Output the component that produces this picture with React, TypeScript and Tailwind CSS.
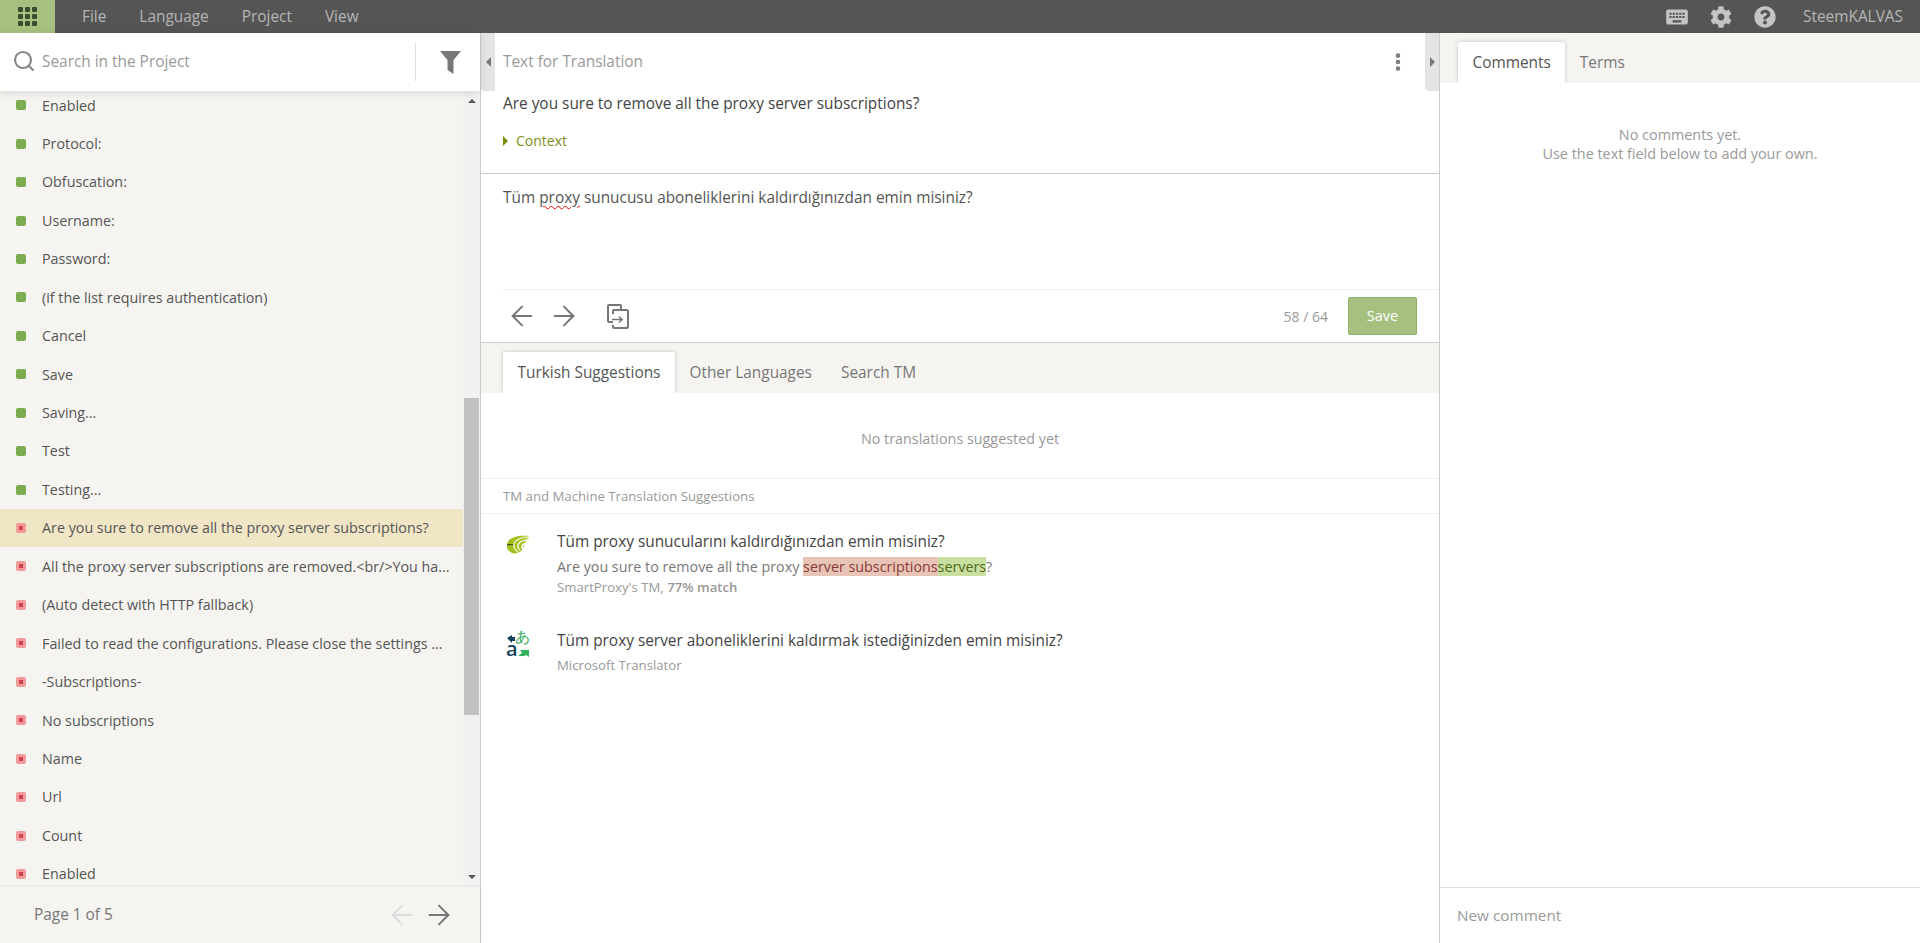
import React from "react";
import { Search, ArrowLeft, ArrowRight, EllipsisVertical } from "lucide-react";
import { MdKeyboard } from "react-icons/md";
import { FaCog, FaQuestionCircle } from "react-icons/fa";

const font = { fontFamily: '"Open Sans", sans-serif' };

const doneRows = [
  "Enabled",
  "Protocol:",
  "Obfuscation:",
  "Username:",
  "Password:",
  "(if the list requires authentication)",
  "Cancel",
  "Save",
  "Saving...",
  "Test",
  "Testing...",
];

const todoRows = [
  "Are you sure to remove all the proxy server subscriptions?",
  "All the proxy server subscriptions are removed.<br/>You ha...",
  "(Auto detect with HTTP fallback)",
  "Failed to read the configurations. Please close the settings ...",
  "-Subscriptions-",
  "No subscriptions",
  "Name",
  "Url",
  "Count",
  "Enabled",
];

const GridIcon = () => (
  <div className="grid grid-cols-3 gap-[2px]">
    {Array.from({ length: 9 }).map((_, i) => (
      <div key={i} className="h-[5px] w-[5px] rounded-[1px] bg-[#3d4a2c]" />
    ))}
  </div>
);

const Row = ({ label, done, active }: { label: string; done: boolean; active?: boolean }) => (
  <div className={`flex h-[38.45px] shrink-0 items-center pl-4 text-[14.3px] text-[#555] ${active ? "bg-[#f0e6c6]" : ""}`}>
    {done ? (
      <div className="h-[10px] w-[10px] rounded-[2px] bg-[#7dab4f]" />
    ) : (
      <div className="flex h-[10px] w-[10px] items-center justify-center rounded-[2px] bg-[#f09a9e]">
        <div className="h-1 w-1 bg-[#d2444c]" />
      </div>
    )}
    <span className="ml-[16px] whitespace-nowrap">{label}</span>
  </div>
);

const Tab = ({ label, active }: { label: string; active?: boolean }) => (
  <div
    className={`flex h-[41px] items-center justify-center px-[14.5px] text-[15.4px] ${
      active ? "rounded-t-[2px] bg-white text-[#555] shadow-[0_0_4px_rgba(0,0,0,0.2)] [clip-path:inset(-6px_-6px_0_-6px)]" : "text-[#777]"
    }`}
  >
    {label}
  </div>
);

const FilterIcon = () => (
  <svg width="21" height="23" viewBox="0 0 21 23" fill="#777">
    <path d="M0 0h21l-7.500 9v14l-6-4V9z" />
  </svg>
);

const CopyIcon = () => (
  <svg width="22" height="25" viewBox="0 0 22 25" fill="none" stroke="#777" strokeWidth="2">
    <path d="M6 18H2a1 1 0 0 1-1-1V2a1 1 0 0 1 1-1h11a1 1 0 0 1 1 1v4" />
    <path d="M6 10V7a1 1 0 0 1 1-1h13a1 1 0 0 1 1 1v16a1 1 0 0 1-1 1H7a1 1 0 0 1-1-1v-2" />
    <path d="M5 15.500h10M12 12.500l3 3-3 3" strokeWidth="1.600" />
  </svg>
);

const SmartProxyLogo = () => (
  <svg width="22" height="19" viewBox="0 0 22 19" fill="none">
    <path d="M0 9C1 3 10 0 22 1c-3 4-5 10-7 14-3 3-7 4-10 3C1 16-1 13 0 9z" fill="#a2bf1e" />
    <path d="M22 2C14 2 8 5 7 9c-.500 3 1 6 4 8" stroke="#e6efb0" strokeWidth="1.500" />
    <path d="M22 5c-6 0-10 2-11 5-.500 2 .500 4 2 5" stroke="#f4f8dc" strokeWidth="1.500" />
    <path d="M22 8c-3 0-6 1-7 3-.500 1 0 2 .500 3" stroke="#fff" strokeWidth="1.500" />
    <path d="M0 9h6v1.200H0z" fill="#3f5a10" />
  </svg>
);

const MsTranslatorLogo = () => (
  <svg width="22" height="27" viewBox="0 0 22 27" className="overflow-visible">
    <path d="M0 8l5-3v2h3v4H5v2z" fill="#12405c" />
    <text x="8" y="12" fontSize="15" fill="#33a860" style={font}>あ</text>
    <text x="-1" y="26" fontSize="20" fontWeight="600" fill="#12405c" style={font}>a</text>
    <path d="M11 26l4-3-2-3h9v7l-3-2-2 1z" fill="#2fb35d" />
  </svg>
);

const App = () => {
  return (
    <div className="flex h-[943px] w-[1920px] flex-col overflow-hidden bg-white" style={font}>
      {/* top bar */}
      <header className="flex h-[33px] shrink-0 items-center bg-[#555] text-[15.4px] text-[#b5b5b5]">
        <div className="flex h-full w-[55px] items-center justify-center bg-[#a5c07f]">
          <GridIcon />
        </div>
        <nav className="ml-[27px] flex gap-[33px]">
          <span>File</span>
          <span>Language</span>
          <span>Project</span>
          <span>View</span>
        </nav>
        <div className="ml-auto flex items-center pr-[17px]">
          <MdKeyboard size={26} className="text-[#c4c4c4]" />
          <FaCog size={22} className="ml-[20px] text-[#c4c4c4]" />
          <FaQuestionCircle size={22} className="ml-[22px] text-[#c4c4c4]" />
          <span className="ml-[27px]">SteemKALVAS</span>
        </div>
      </header>

      <div className="flex min-h-0 flex-1">
        {/* project strings */}
        <aside className="flex w-[481px] shrink-0 flex-col border-r border-[#ccc] bg-[#f6f4f1]">
          <div className="z-10 flex h-[58px] shrink-0 items-center bg-white shadow-[0_2px_8px_rgba(0,0,0,0.12)]">
            <Search size={24} className="mb-[2px] ml-[12px] text-[#888]" strokeWidth={2.2} />
            <span className="mb-[1px] ml-[6px] text-[15.4px] text-[#999]">Search in the Project</span>
            <div className="ml-auto h-[38px] w-px bg-[#ddd]" />
            <div className="ml-[24px] mr-[19px] flex"><FilterIcon /></div>
          </div>
          <div className="flex min-h-0 flex-1 overflow-hidden">
            <div className="-mt-[5px] flex min-w-0 flex-1 flex-col">
              {doneRows.map((label, i) => (
                <Row key={i} label={label} done />
              ))}
              {todoRows.map((label, i) => (
                <Row key={i} label={label} done={false} active={i === 0} />
              ))}
            </div>
            {/* scrollbar */}
            <div className="flex w-[17px] shrink-0 flex-col items-center bg-[#f1f1f1]">
              <div className="mt-[8px] h-0 w-0 border-x-[4px] border-b-[4px] border-x-transparent border-b-[#555]" />
              <div className="mt-[295px] h-[317px] w-[15px] bg-[#c1c1c1]" />
              <div className="mb-[8px] mt-auto h-0 w-0 border-x-[4px] border-t-[4px] border-x-transparent border-t-[#555]" />
            </div>
          </div>
          <div className="z-10 flex h-[56px] shrink-0 items-center bg-[#f6f4f1] pl-[34px] pr-[25px] text-[15.4px] text-[#777] shadow-[0_-1px_3px_rgba(0,0,0,0.06)]">
            <span>Page 1 of 5</span>
            <ArrowLeft size={32} strokeWidth={1.5} className="ml-auto text-[#ddd]" />
            <ArrowRight size={32} strokeWidth={1.5} className="ml-[5px] text-[#777]" />
          </div>
        </aside>

        {/* editor */}
        <main className="flex min-w-0 flex-1 flex-col border-r border-[#ccc]">
          <section className="relative h-[141px] shrink-0 border-b border-[#ccc] px-[22px]">
            <div className="absolute left-0 top-0 flex h-[58px] w-[14px] items-center justify-center rounded-bl-[4px] bg-[#e4e4e4]">
              <div className="h-0 w-0 border-y-[5px] border-r-[5px] border-y-transparent border-r-[#777]" />
            </div>
            <div className="absolute right-0 top-0 flex h-[58px] w-[14px] items-center justify-center rounded-bl-[4px] bg-[#e4e4e4]">
              <div className="h-0 w-0 border-y-[5px] border-l-[5px] border-y-transparent border-l-[#777]" />
            </div>
            <div className="flex h-[58px] items-center justify-between text-[15.4px] text-[#999]">
              <span className="mb-[1px]">Text for Translation</span>
              <EllipsisVertical size={22} className="mr-[8px] text-[#777]" strokeWidth={3} />
            </div>
            <p className="pt-[1px] text-[15.4px] leading-[24px] text-[#444]">Are you sure to remove all the proxy server subscriptions?</p>
            <div className="mt-[13px] flex items-center text-[14px] leading-[24px] text-[#7f8f1a]">
              <div className="h-0 w-0 border-y-[5px] border-l-[5px] border-y-transparent border-l-[#7a8c00]" />
              <span className="ml-[8px]">Context</span>
            </div>
          </section>

          <section className="h-[169px] shrink-0 border-b border-[#ccc]">
            <div className="ml-[22px] h-[116px] border-b border-[#eee] pt-[12px] text-[15.4px] leading-[24px] text-[#555]">
              Tüm <span className="underline decoration-[#e00] decoration-wavy decoration-1 underline-offset-2">proxy</span> sunucusu aboneliklerini kaldırdığınızdan emin misiniz?
            </div>
            <div className="flex h-[52px] items-center pl-[25px] pr-[22px]">
              <ArrowLeft size={32} strokeWidth={1.5} className="text-[#777]" />
              <ArrowRight size={32} strokeWidth={1.5} className="ml-[10px] text-[#777]" />
              <div className="ml-[27px] flex"><CopyIcon /></div>
              <span className="ml-auto text-[14px] text-[#999]">58 / 64</span>
              <button className="ml-[20px] h-[38px] w-[69px] rounded-[2px] border border-[#8fae66] bg-[#a5c07f] text-[14.5px] font-medium text-white">Save</button>
            </div>
          </section>

          <section className="flex h-[50px] shrink-0 items-end bg-[#f6f4f1] pl-[22px]">
            <Tab label="Turkish Suggestions" active />
            <Tab label="Other Languages" />
            <Tab label="Search TM" />
          </section>

          <div className="flex h-[86px] shrink-0 items-center justify-center border-b border-[#eee] pt-[6px] text-[14.35px] text-[#999]">No translations suggested yet</div>
          <div className="flex h-[35px] shrink-0 items-center border-b border-[#eee] pl-[22px] pt-[1px] text-[13.2px] text-[#999]">TM and Machine Translation Suggestions</div>

          <div className="flex pl-[26px] pt-[18px]">
            <div className="w-[26px] shrink-0 pt-[3px]"><SmartProxyLogo /></div>
            <div className="ml-[24px]">
              <p className="text-[15.4px] leading-[20px] text-[#444]">Tüm proxy sunucularını kaldırdığınızdan emin misiniz?</p>
              <p className="mt-[5px] text-[14.3px] leading-[19px] text-[#777]">
                Are you sure to remove all the proxy <span className="bg-[#e8c4b6] text-[#8a3a3a]">server subscriptions</span>
                <span className="bg-[#c9df9f] text-[#4f6a1c]">servers</span>?
              </p>
              <p className="mt-[2px] text-[13.2px] leading-[18px] text-[#999]">
                SmartProxy&apos;s TM, <b className="font-semibold">77% match</b>
              </p>
            </div>
          </div>
          <div className="mt-[35px] flex pl-[26px]">
            <div className="w-[26px] shrink-0 -mt-[1px]"><MsTranslatorLogo /></div>
            <div className="ml-[24px]">
              <p className="text-[15.4px] leading-[20px] text-[#444]">Tüm proxy server aboneliklerini kaldırmak istediğinizden emin misiniz?</p>
              <p className="mt-[5px] text-[13.2px] leading-[18px] text-[#999]">Microsoft Translator</p>
            </div>
          </div>
        </main>

        {/* comments */}
        <aside className="flex w-[480px] shrink-0 flex-col">
          <div className="flex h-[50px] shrink-0 items-end bg-[#f6f4f1] pl-[18px]">
            <Tab label="Comments" active />
            <Tab label="Terms" />
          </div>
          <div className="flex-1 pt-[42px] text-center text-[14.4px] leading-[19px] text-[#999]">
            <p>No comments yet.</p>
            <p>Use the text field below to add your own.</p>
          </div>
          <div className="flex h-[56px] shrink-0 items-center border-t border-[#ddd] pl-[17px] text-[15.3px] text-[#999]">New comment</div>
        </aside>
      </div>
    </div>
  );
};

export default App;
